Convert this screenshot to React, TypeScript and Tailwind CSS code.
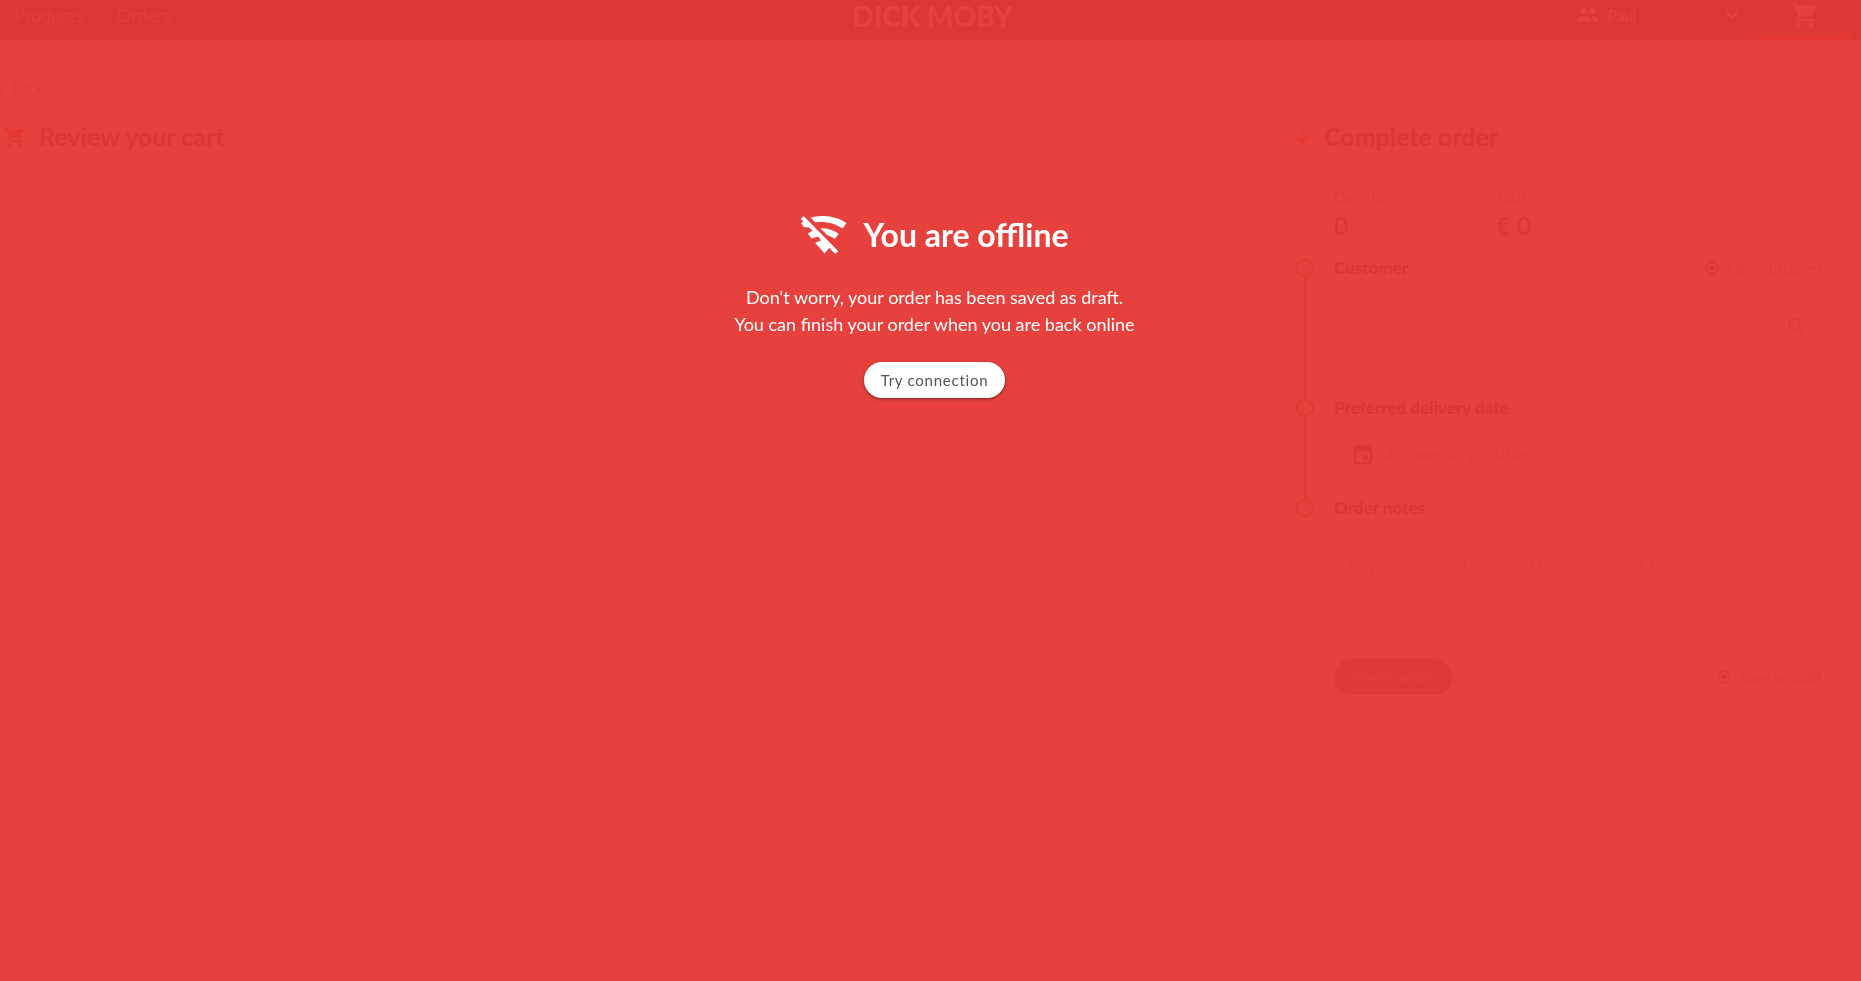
import type { ReactNode } from "react";
import {
  MdAddCircleOutline,
  MdArrowDownward,
  MdEvent,
  MdExpandMore,
  MdPeople,
  MdSearch,
  MdShoppingCart,
} from "react-icons/md";

function WifiOffIcon() {
  return (
    <svg viewBox="0 0 47 38" className="h-[38px] w-[47px] fill-white" aria-hidden="true">
      <path d="M10.5 1.6C22 -1.6 36 -0.2 46.5 7L42.6 12.6C34.5 7 25 5.2 15.4 6.4Z" />
      <path d="M20.5 12.4C27 12 33.5 14 38.8 17.8L34.8 23C32.4 21.2 30 20 27.4 19.2Z" />
      <path d="M3.6 0L38.3 35.2L35.4 38L29.2 31.8L24.6 37.6L15.2 27L21 24.2L18 20.6L11.6 22.4L7.8 17.6L12.6 14.8L9 11.4L3.8 11L1 7L3.4 5.6L0.6 3Z" />
    </svg>
  );
}

function Header() {
  return (
    <header className="flex h-10 bg-black pr-[11px] text-white">
      <nav className="flex flex-1 gap-[34px] pl-[15px] text-lg leading-[30px] font-light">
        <a href="#products">Products</a>
        <a href="#orders">Orders</a>
      </nav>
      <a href="#home" className="text-[28px] leading-8 font-black">
        DICK MOBY
      </a>
      <div className="flex flex-1 justify-end">
        <button type="button" className="flex h-[30px] w-[168px] items-center text-[15px]">
          <MdPeople className="mr-2 size-6" />
          Paul
          <MdExpandMore className="ml-auto size-6" />
        </button>
        <a
          href="#cart"
          aria-label="Cart"
          className="ml-4 flex w-[90px] justify-center border-b-[6px] border-[#ff2000] bg-[#222]"
        >
          <MdShoppingCart className="size-[30px]" />
        </a>
      </div>
    </header>
  );
}

function Step({
  title,
  htmlFor,
  action,
  last,
  className,
  children,
}: {
  title: string;
  htmlFor: string;
  action?: ReactNode;
  last?: boolean;
  className: string;
  children: ReactNode;
}) {
  return (
    <section className="flex gap-5">
      <div className="flex w-[18px] flex-col items-center">
        <span className="size-[18px] shrink-0 rounded-full border-2 border-[#ff2000]" />
        {!last && <span className="w-[2px] flex-1 bg-[#ff2000]" />}
      </div>
      <div className={className}>
        <div className="flex h-[18px] items-center justify-between">
          <label htmlFor={htmlFor} className="text-[17px] font-black">
            {title}
          </label>
          {action}
        </div>
        {children}
      </div>
    </section>
  );
}

function IconAction({ label }: { label: string }) {
  return (
    <button type="button" className="flex items-center gap-2 text-[15px] leading-5 font-light">
      <MdAddCircleOutline className="size-4" />
      {label}
    </button>
  );
}

function OrderForm() {
  return (
    <form className="mt-4 w-[590px] border-t-4 border-[#ddd] pr-7 pl-8">
      <h2 className="mt-[19px] flex h-9 items-center gap-3 text-[25px] font-bold">
        <MdArrowDownward className="size-5 text-[#ff2000]" />
        Complete order
      </h2>
      <div className="pl-1">
        <dl className="mt-8 mb-[18px] ml-[38px] flex">
          <div className="w-[163px]">
            <dt className="text-sm font-light">Quantity</dt>
            <dd className="mt-1 text-2xl leading-[30px] font-medium">0</dd>
          </div>
          <div>
            <dt className="text-sm font-light">Total</dt>
            <dd className="mt-1 text-2xl leading-[30px] font-medium">€ 0</dd>
          </div>
        </dl>
        <Step
          title="Customer"
          htmlFor="customer"
          action={<IconAction label="New customer" />}
          className="h-[140px] flex-1"
        >
          <div className="mt-[22px] flex h-14 items-center rounded border border-[#aaa] px-3">
            <input
              id="customer"
              type="search"
              placeholder="Search existing customer"
              className="flex-1 text-[17px] font-light outline-none placeholder:text-[#777]"
            />
            <MdSearch className="size-6 text-[#555]" />
          </div>
        </Step>
        <Step title="Preferred delivery date" htmlFor="delivery" className="h-[100px] flex-1">
          <button
            id="delivery"
            type="button"
            className="mt-5 flex h-9 items-center gap-[10px] rounded-full border border-[#aaa] px-4 text-sm font-light tracking-widest"
          >
            <MdEvent className="size-6" />
            As soon as possible
          </button>
        </Step>
        <Step title="Order notes" htmlFor="notes" last className="flex-1">
          <textarea
            id="notes"
            placeholder="Anything special we need to know about this order?"
            className="mt-5 block h-[81px] w-full resize rounded border border-[#aaa] px-3 py-4 text-[17px] leading-6 font-light outline-none placeholder:text-[#777]"
          />
          <div className="mt-[41px] flex h-9 items-center justify-between">
            <button
              type="button"
              className="h-9 rounded-full bg-[#555] px-[18px] text-[15px] tracking-wider text-[#bbb]"
            >
              Place order
            </button>
            <IconAction label="Save as draft" />
          </div>
        </Step>
      </div>
    </form>
  );
}

function OfflineOverlay() {
  return (
    <div
      role="alertdialog"
      aria-labelledby="offline-title"
      className="fixed inset-0 flex flex-col items-center bg-[#e53935]/96 pt-[210px] pl-2 text-white"
    >
      <div className="flex h-[50px] items-center gap-4">
        <WifiOffIcon />
        <h1 id="offline-title" className="text-[32px] leading-[48px] font-bold">
          You are offline
        </h1>
      </div>
      <p className="mt-6 text-center text-lg leading-[27px]">
        Don't worry, your order has been saved as draft.
        <br />
        You can finish your order when you are back online
      </p>
      <button
        type="button"
        className="mt-6 h-9 rounded-full bg-white px-[17px] text-[15px] tracking-wider text-[#555] shadow-[0_1px_3px_rgba(0,0,0,0.5)]"
      >
        Try connection
      </button>
    </div>
  );
}

export default function App() {
  return (
    <div className="min-h-screen overflow-hidden bg-white font-['Lato',sans-serif] text-black">
      <Header />
      <div className="flex justify-between pr-[11px]">
        <main className="pt-[38px]">
          <a href="#back" className="-ml-1 flex items-center gap-2 text-[15px] leading-5 font-light">
            <span className="w-2 text-right text-xl leading-5">‹</span>
            Back
          </a>
          <h2 className="mt-[21px] flex h-9 items-center gap-3 pl-[3px] text-[25px] font-bold">
            <MdShoppingCart className="size-6 text-[#ff2000]" />
            Review your cart
          </h2>
        </main>
        <div className="pt-10">
          <OrderForm />
        </div>
      </div>
      <OfflineOverlay />
    </div>
  );
}
